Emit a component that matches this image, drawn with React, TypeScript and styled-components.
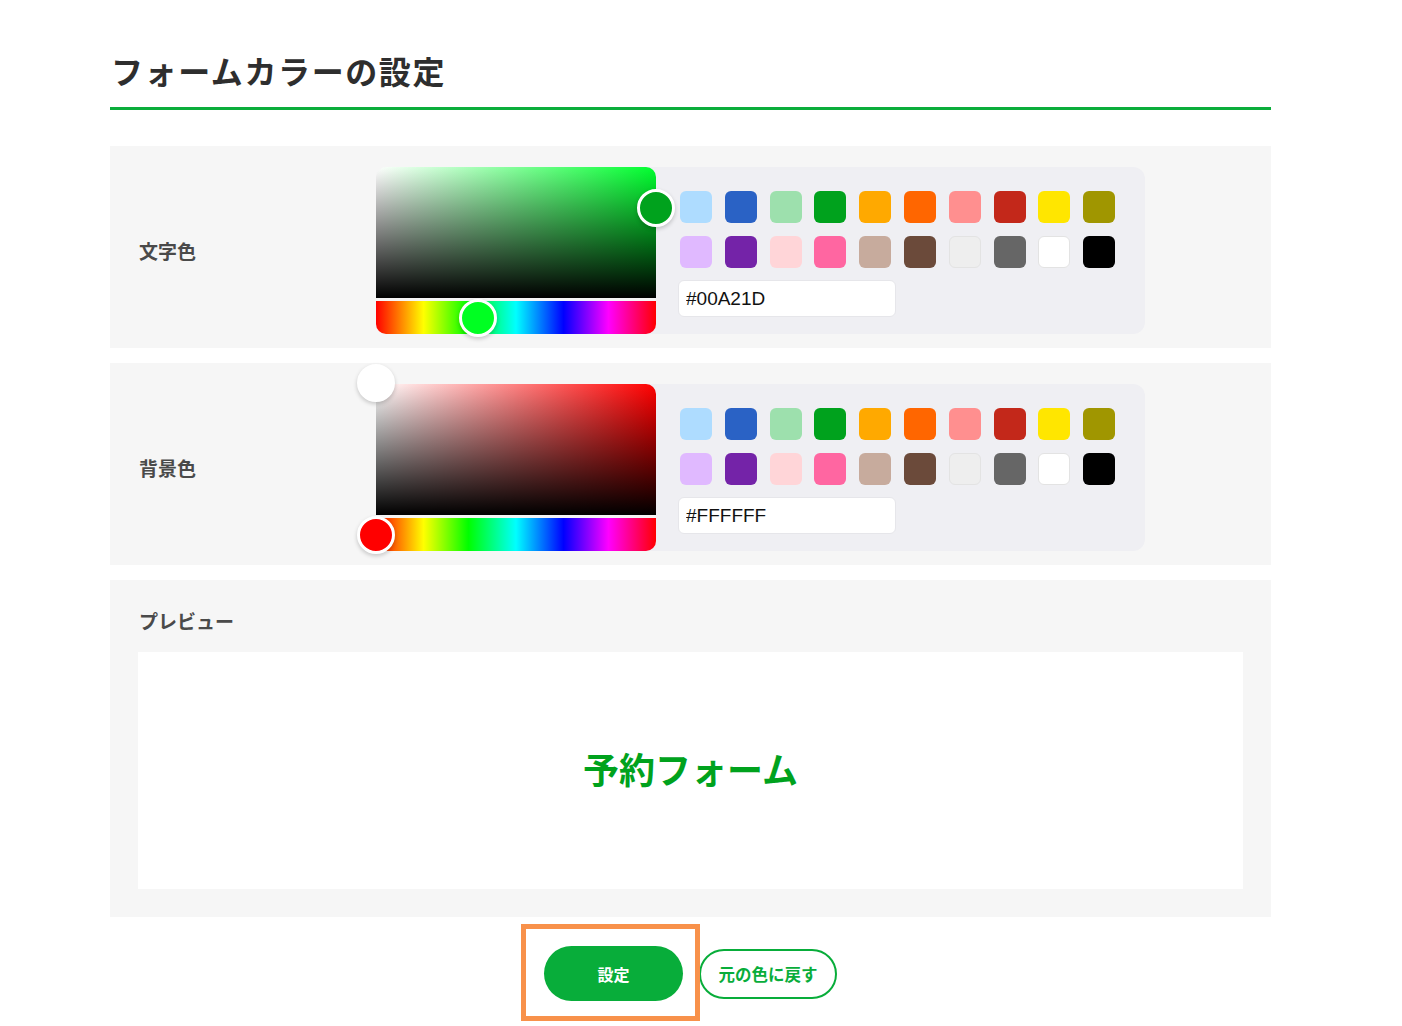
import React from "react";
import styled, { createGlobalStyle } from "styled-components";

const GlobalStyle = createGlobalStyle`
  * { box-sizing: border-box; }
  html, body { margin: 0; padding: 0; background: #fff; }
  body {
    font-family: "Noto Sans CJK JP", "Noto Sans", sans-serif;
    color: #333;
  }
`;

const Page = styled.div`
  padding: 46px 0 0 110px;
`;

const Container = styled.div`
  width: 1161px;
`;

const Title = styled.h1`
  margin: 0;
  padding: 0 0 13px 1px;
  font-size: 32px;
  line-height: 48px;
  letter-spacing: 1.6px;
  font-weight: 700;
  color: #2e2e2e;
  border-bottom: 3px solid #0aad3b;
`;

const Sections = styled.div`
  margin-top: 36px;
  display: flex;
  flex-direction: column;
  gap: 15px;
`;

const ColorSection = styled.section`
  background: #f6f6f6;
  display: flex;
  align-items: center;
  padding: 21px 0 14px 29px;
`;

const Label = styled.div`
  width: 237px;
  font-size: 19px;
  font-weight: 700;
  color: #4a4a4a;
  line-height: 28px;
`;

const PickerBox = styled.div`
  display: flex;
  background: #efeff3;
  border-radius: 12px;
  width: 769px;
  height: 167px;
`;

const Picker = styled.div`
  position: relative;
  width: 280px;
  display: flex;
  flex-direction: column;
  flex-shrink: 0;
`;

const Saturation = styled.div<{ $hue: number }>`
  height: 131px;
  border-radius: 10px 10px 0 0;
  background: linear-gradient(to top, #000, rgba(0, 0, 0, 0)),
    linear-gradient(to right, #fff, hsl(${(p) => p.$hue}, 100%, 50%));
`;

const Divider = styled.div`
  height: 3px;
  background: #f4f4f4;
`;

const HueBar = styled.div`
  height: 33px;
  border-radius: 0 0 10px 10px;
  background: linear-gradient(
    to right,
    #f00 0%,
    #ff0 17%,
    #0f0 33%,
    #0ff 50%,
    #00f 67%,
    #f0f 83%,
    #f00 100%
  );
`;

const Handle = styled.div<{ $color: string }>`
  position: absolute;
  width: 38px;
  height: 38px;
  margin: -19px 0 0 -19px;
  border-radius: 50%;
  background: ${(p) => p.$color};
  border: 3px solid #fff;
  box-shadow: 0 2px 4px rgba(0, 0, 0, 0.2);
`;

const Palette = styled.div`
  padding: 24px 0 0 22px;
  display: flex;
  flex-direction: column;
`;

const SwatchGrid = styled.div`
  display: grid;
  grid-template-columns: repeat(10, 32px);
  column-gap: 12.8px;
  row-gap: 13px;
  padding-left: 2px;
`;

const Swatch = styled.div<{ $color: string; $bordered?: boolean }>`
  width: 32px;
  height: 32px;
  border-radius: 6px;
  background: ${(p) => p.$color};
  border: ${(p) => (p.$bordered ? "1px solid #e3e3e3" : "none")};
`;

const HexInput = styled.input`
  margin-top: 12px;
  width: 218px;
  height: 37px;
  border: 1px solid #e6e6ea;
  border-radius: 6px;
  background: #fff;
  padding: 0 7px;
  font-family: "Liberation Sans", Arial, sans-serif;
  font-size: 19px;
  color: #111;
  outline: none;
`;

const PreviewSection = styled.section`
  background: #f6f6f6;
  padding: 27px 28px 28px 28px;
`;

const PreviewLabel = styled(Label)`
  width: auto;
  padding-left: 1px;
  margin-bottom: 17px;
`;

const PreviewBox = styled.div<{ $bg: string }>`
  height: 237px;
  padding-bottom: 6px;
  background: ${(p) => p.$bg};
  display: flex;
  align-items: center;
  justify-content: center;
`;

const PreviewText = styled.div<{ $color: string }>`
  font-size: 36px;
  font-weight: 700;
  color: ${(p) => p.$color};
`;

const ButtonRow = styled.div`
  margin-top: 29px;
  display: flex;
  justify-content: center;
  align-items: center;
  gap: 16px;
  padding-bottom: 20px;
`;

const FocusWrap = styled.div`
  position: relative;
  display: flex;
`;

const FocusRing = styled.div`
  position: absolute;
  left: -23px;
  top: -22px;
  width: 179px;
  height: 97px;
  border: 5px solid #f8914a;
  pointer-events: none;
`;

const PrimaryButton = styled.button`
  width: 139px;
  height: 55px;
  border: none;
  border-radius: 28px;
  background: #08ad3a;
  color: #fff;
  font-family: "Noto Sans CJK JP", sans-serif;
  font-size: 16px;
  font-weight: 700;
  cursor: pointer;
`;

const OutlineButton = styled.button`
  width: 138px;
  height: 50px;
  border: 2.5px solid #08ad3a;
  border-radius: 26px;
  background: #fff;
  color: #08ad3a;
  font-family: "Noto Sans CJK JP", sans-serif;
  font-size: 16.5px;
  font-weight: 700;
  cursor: pointer;
`;

const SWATCHES: { c: string; b?: boolean }[] = [
  { c: "#aedcff" },
  { c: "#2a62c5" },
  { c: "#9de0ad" },
  { c: "#00a21d" },
  { c: "#ffa900" },
  { c: "#ff6600" },
  { c: "#ff8f8f" },
  { c: "#c3281a" },
  { c: "#ffe600" },
  { c: "#a09600" },
  { c: "#e0b9ff" },
  { c: "#7423a8" },
  { c: "#ffd5d8" },
  { c: "#ff66a1" },
  { c: "#c7ab9d" },
  { c: "#6b4a3a" },
  { c: "#eeeeee", b: true },
  { c: "#666666" },
  { c: "#ffffff", b: true },
  { c: "#000000" },
];

type RowProps = {
  label: string;
  hue: number;
  value: string;
  sat: { x: number; y: number };
  hueX: number;
  hueColor: string;
};

const ColorRow: React.FC<RowProps> = ({ label, hue, value, sat, hueX, hueColor }) => (
  <ColorSection>
    <Label>{label}</Label>
    <PickerBox>
      <Picker>
        <Saturation $hue={hue} />
        <Divider />
        <HueBar />
        <Handle $color={value} style={{ left: sat.x, top: sat.y }} />
        <Handle $color={hueColor} style={{ left: hueX, top: 151 }} />
      </Picker>
      <Palette>
        <SwatchGrid>
          {SWATCHES.map((s, i) => (
            <Swatch key={i} $color={s.c} $bordered={s.b} />
          ))}
        </SwatchGrid>
        <HexInput defaultValue={value.toUpperCase()} />
      </Palette>
    </PickerBox>
  </ColorSection>
);

export default function App() {
  return (
    <>
      <GlobalStyle />
      <Page>
        <Container>
          <Title>フォームカラーの設定</Title>
          <Sections>
            <ColorRow
              label="文字色"
              hue={131}
              value="#00A21D"
              sat={{ x: 280, y: 41 }}
              hueX={102}
              hueColor="#00ff22"
            />
            <ColorRow
              label="背景色"
              hue={0}
              value="#FFFFFF"
              sat={{ x: 0, y: -1 }}
              hueX={0}
              hueColor="#ff0000"
            />
            <PreviewSection>
              <PreviewLabel>プレビュー</PreviewLabel>
              <PreviewBox $bg="#ffffff">
                <PreviewText $color="#00A21D">予約フォーム</PreviewText>
              </PreviewBox>
            </PreviewSection>
          </Sections>
          <ButtonRow>
            <FocusWrap>
              <PrimaryButton>設定</PrimaryButton>
              <FocusRing />
            </FocusWrap>
            <OutlineButton>元の色に戻す</OutlineButton>
          </ButtonRow>
        </Container>
      </Page>
    </>
  );
}
